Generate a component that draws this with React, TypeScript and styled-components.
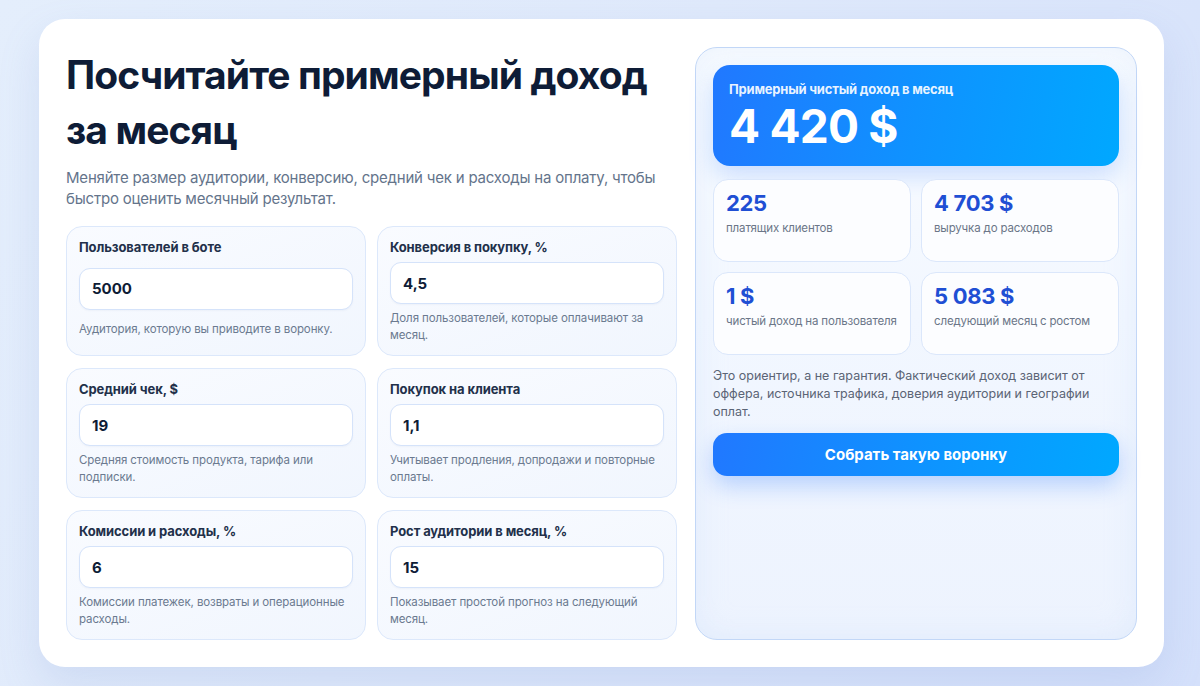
import styled, { createGlobalStyle } from 'styled-components';

const GlobalStyle = createGlobalStyle`
  html, body {
    margin: 0;
    padding: 0;
  }
  body {
    min-height: 686px;
    font-family: Inter, "Noto Sans", "DejaVu Sans", sans-serif;
    background: linear-gradient(120deg, #e4eefc 0%, #dfe9fb 45%, #d4e0fb 100%);
    color: #0e1c36;
  }
  * { box-sizing: border-box; }
`;

const Page = styled.div`
  padding: 19px 36px 19px 39px;
`;

const Card = styled.section`
  display: grid;
  grid-template-columns: 1fr 442px;
  gap: 18px;
  padding: 28px 27px 27px 27px;
  height: 648px;
  background: #ffffff;
  border-radius: 26px;
  box-shadow: 0 18px 40px rgba(120, 150, 210, 0.18);
`;

const Left = styled.div`
  display: flex;
  flex-direction: column;
`;

const Title = styled.h1`
  margin: 0;
  font-size: 39px;
  line-height: 55px;
  font-weight: 700;
  letter-spacing: -0.9px;
  color: #0e1c36;
`;

const Lead = styled.p`
  margin: 10px 0 17px;
  font-size: 15px;
  line-height: 21px;
  color: #64748b;
  letter-spacing: -0.2px;
`;

const Fields = styled.div`
  display: grid;
  grid-template-columns: 1fr 1fr;
  gap: 12px 11px;
`;

const Field = styled.label`
  display: grid;
  grid-template-rows: auto auto auto;
  row-gap: 6px;
  padding: 11px 12px 11px 12px;
  border: 1px solid #dce8fb;
  border-radius: 16px;
  background: linear-gradient(160deg, #f9fbff 0%, #f1f6fe 100%);
  min-height: 129px;
`;

const FieldLabel = styled.span`
  align-self: start;
  font-size: 13px;
  line-height: 18px;
  font-weight: 700;
  color: #22304a;
  letter-spacing: -0.1px;
`;

const Input = styled.input`
  align-self: start;
  height: 42px;
  width: 100%;
  padding: 0 12px;
  border: 1px solid #d5e3fa;
  border-radius: 11px;
  background: #ffffff;
  font-family: inherit;
  font-size: 15px;
  font-weight: 700;
  color: #0e1c36;
  outline: none;
  box-shadow: 0 1px 2px rgba(30, 60, 120, 0.04);
`;

const Help = styled.span`
  align-self: start;
  font-size: 11.5px;
  line-height: 17px;
  color: #6b7a90;
  letter-spacing: -0.1px;
`;

const Panel = styled.aside`
  display: flex;
  flex-direction: column;
  padding: 17px 17px;
  border: 1px solid #c2d7f7;
  border-radius: 22px;
  background: linear-gradient(180deg, #fbfdff 0%, #f2f7ff 45%, #edf3fe 100%);
  box-shadow: inset 0 0 30px rgba(200, 220, 250, 0.35);
`;

const Hero = styled.div`
  padding: 15px 16px 16px;
  border-radius: 17px;
  background: linear-gradient(100deg, #2178ff 0%, #0f92ff 50%, #00a8ff 100%);
  box-shadow: 0 10px 24px rgba(40, 120, 250, 0.22);
  color: #ffffff;
`;

const HeroLabel = styled.div`
  font-size: 13px;
  line-height: 18px;
  font-weight: 700;
  letter-spacing: -0.2px;
  color: rgba(255, 255, 255, 0.92);
  margin-bottom: 5px;
`;

const HeroValue = styled.div`
  font-size: 46px;
  line-height: 47px;
  font-weight: 700;
  letter-spacing: -0.8px;
`;

const Stats = styled.div`
  display: grid;
  grid-template-columns: 1fr 1fr;
  gap: 10px;
  margin-top: 13px;
`;

const Stat = styled.div`
  min-height: 83px;
  padding: 10px 12px;
  border: 1px solid #dbe7fb;
  border-radius: 15px;
  background: #fcfdff;
`;

const StatValue = styled.div`
  font-size: 22px;
  line-height: 27px;
  font-weight: 700;
  color: #1f4fd4;
  letter-spacing: -0.3px;
`;

const StatLabel = styled.div`
  margin-top: 3px;
  font-size: 11.5px;
  line-height: 16px;
  color: #6b7688;
  letter-spacing: -0.15px;
  white-space: nowrap;
`;

const Note = styled.p`
  margin: 12px 0 0;
  font-size: 12.5px;
  line-height: 18px;
  color: #5b6475;
`;

const Action = styled.button`
  margin-top: 12px;
  height: 43px;
  border: none;
  border-radius: 14px;
  background: linear-gradient(100deg, #2178ff 0%, #0f92ff 50%, #00a8ff 100%);
  box-shadow: 0 10px 22px rgba(40, 120, 250, 0.28);
  color: #ffffff;
  font-family: inherit;
  font-size: 15px;
  font-weight: 700;
  cursor: pointer;
`;

const fields = [
  { label: 'Пользователей в боте', value: '5000', help: 'Аудитория, которую вы приводите в воронку.' },
  { label: 'Конверсия в покупку, %', value: '4,5', help: 'Доля пользователей, которые оплачивают за месяц.' },
  { label: 'Средний чек, $', value: '19', help: 'Средняя стоимость продукта, тарифа или подписки.' },
  { label: 'Покупок на клиента', value: '1,1', help: 'Учитывает продления, допродажи и повторные оплаты.' },
  { label: 'Комиссии и расходы, %', value: '6', help: 'Комиссии платежек, возвраты и операционные расходы.' },
  { label: 'Рост аудитории в месяц, %', value: '15', help: 'Показывает простой прогноз на следующий месяц.' },
];

const stats = [
  { value: '225', label: 'платящих клиентов' },
  { value: '4 703 $', label: 'выручка до расходов' },
  { value: '1 $', label: 'чистый доход на пользователя' },
  { value: '5 083 $', label: 'следующий месяц с ростом' },
];

export default function App() {
  return (
    <>
      <GlobalStyle />
      <Page>
        <Card>
          <Left>
            <Title>Посчитайте примерный доход за месяц</Title>
            <Lead>
              Меняйте размер аудитории, конверсию, средний чек и расходы на оплату, чтобы
              быстро оценить месячный результат.
            </Lead>
            <Fields>
              {fields.map((f) => (
                <Field key={f.label}>
                  <FieldLabel>{f.label}</FieldLabel>
                  <Input defaultValue={f.value} />
                  <Help>{f.help}</Help>
                </Field>
              ))}
            </Fields>
          </Left>
          <Panel>
            <Hero>
              <HeroLabel>Примерный чистый доход в месяц</HeroLabel>
              <HeroValue>4 420 $</HeroValue>
            </Hero>
            <Stats>
              {stats.map((s) => (
                <Stat key={s.label}>
                  <StatValue>{s.value}</StatValue>
                  <StatLabel>{s.label}</StatLabel>
                </Stat>
              ))}
            </Stats>
            <Note>
              Это ориентир, а не гарантия. Фактический доход зависит от оффера, источника
              трафика, доверия аудитории и географии оплат.
            </Note>
            <Action type="button">Собрать такую воронку</Action>
          </Panel>
        </Card>
      </Page>
    </>
  );
}
